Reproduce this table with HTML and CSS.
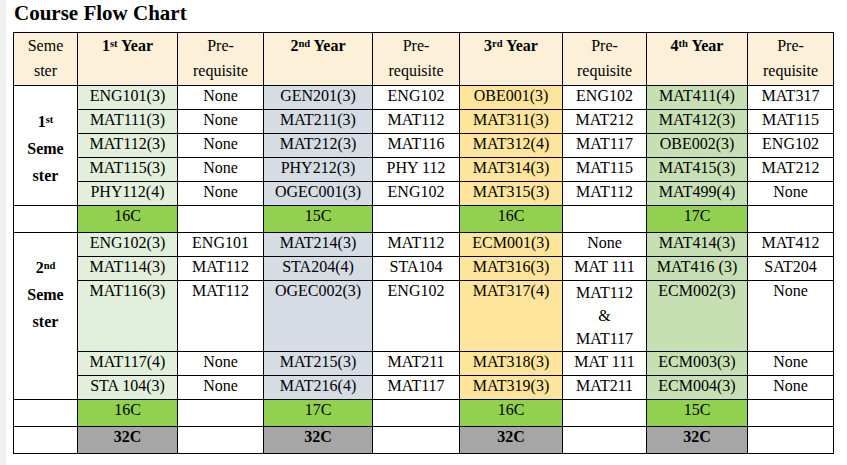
FILE: index.html
```html
<!DOCTYPE html>
<html>
<head>
<meta charset="utf-8">
<link rel="stylesheet" href="styles.css">
</head>
<body>
<div class="page">
<h1 class="title">Course Flow Chart</h1>
<table class="chart">
<colgroup>
<col class="c-sem"><col class="c-y1"><col class="c-p1"><col class="c-y2"><col class="c-p2"><col class="c-y3"><col class="c-p3"><col class="c-y4"><col class="c-p4">
</colgroup>
<thead>
<tr class="head">
<th class="h-plain">Seme<br>ster</th>
<th><span class="yr">1<sup>st</sup> Year</span><br>&nbsp;</th>
<th class="h-plain">Pre-<br>requisite</th>
<th><span class="yr">2<sup>nd</sup> Year</span><br>&nbsp;</th>
<th class="h-plain">Pre-<br>requisite</th>
<th><span class="yr">3<sup>rd</sup> Year</span><br>&nbsp;</th>
<th class="h-plain">Pre-<br>requisite</th>
<th><span class="yr">4<sup>th</sup> Year</span><br>&nbsp;</th>
<th class="h-plain">Pre-<br>requisite</th>
</tr>
</thead>
<tbody>
<tr>
<td class="sem sem1" rowspan="5">1<sup>st</sup><br>Seme<br>ster</td>
<td class="y1">ENG101(3)</td><td>None</td>
<td class="y2">GEN201(3)</td><td>ENG102</td>
<td class="y3">OBE001(3)</td><td>ENG102</td>
<td class="y4">MAT411(4)</td><td>MAT317</td>
</tr>
<tr>
<td class="y1">MAT111(3)</td><td>None</td>
<td class="y2">MAT211(3)</td><td>MAT112</td>
<td class="y3">MAT311(3)</td><td>MAT212</td>
<td class="y4">MAT412(3)</td><td>MAT115</td>
</tr>
<tr>
<td class="y1">MAT112(3)</td><td>None</td>
<td class="y2">MAT212(3)</td><td>MAT116</td>
<td class="y3">MAT312(4)</td><td>MAT117</td>
<td class="y4">OBE002(3)</td><td>ENG102</td>
</tr>
<tr>
<td class="y1">MAT115(3)</td><td>None</td>
<td class="y2">PHY212(3)</td><td>PHY 112</td>
<td class="y3">MAT314(3)</td><td>MAT115</td>
<td class="y4">MAT415(3)</td><td>MAT212</td>
</tr>
<tr>
<td class="y1">PHY112(4)</td><td>None</td>
<td class="y2">OGEC001(3)</td><td>ENG102</td>
<td class="y3">MAT315(3)</td><td>MAT112</td>
<td class="y4">MAT499(4)</td><td>None</td>
</tr>
<tr class="credits">
<td></td>
<td class="tot">16C</td><td></td>
<td class="tot">15C</td><td></td>
<td class="tot">16C</td><td></td>
<td class="tot">17C</td><td></td>
</tr>
<tr>
<td class="sem sem2" rowspan="5">2<sup>nd</sup><br>Seme<br>ster</td>
<td class="y1">ENG102(3)</td><td>ENG101</td>
<td class="y2">MAT214(3)</td><td>MAT112</td>
<td class="y3">ECM001(3)</td><td>None</td>
<td class="y4">MAT414(3)</td><td>MAT412</td>
</tr>
<tr>
<td class="y1">MAT114(3)</td><td>MAT112</td>
<td class="y2">STA204(4)</td><td>STA104</td>
<td class="y3">MAT316(3)</td><td>MAT 111</td>
<td class="y4">MAT416 (3)</td><td>SAT204</td>
</tr>
<tr class="tall">
<td class="y1">MAT116(3)</td><td>MAT112</td>
<td class="y2">OGEC002(3)</td><td>ENG102</td>
<td class="y3">MAT317(4)</td><td class="multi">MAT112<br>&amp;<br>MAT117</td>
<td class="y4">ECM002(3)</td><td>None</td>
</tr>
<tr>
<td class="y1">MAT117(4)</td><td>None</td>
<td class="y2">MAT215(3)</td><td>MAT211</td>
<td class="y3">MAT318(3)</td><td>MAT 111</td>
<td class="y4">ECM003(3)</td><td>None</td>
</tr>
<tr>
<td class="y1">STA 104(3)</td><td>None</td>
<td class="y2">MAT216(4)</td><td>MAT117</td>
<td class="y3">MAT319(3)</td><td>MAT211</td>
<td class="y4">ECM004(3)</td><td>None</td>
</tr>
<tr class="credits">
<td></td>
<td class="tot">16C</td><td></td>
<td class="tot">17C</td><td></td>
<td class="tot">16C</td><td></td>
<td class="tot">15C</td><td></td>
</tr>
<tr class="credits grand">
<td></td>
<td class="sum">32C</td><td></td>
<td class="sum">32C</td><td></td>
<td class="sum">32C</td><td></td>
<td class="sum">32C</td><td></td>
</tr>
</tbody>
</table>
</div>
</body>
</html>
```

FILE: styles.css
```css
html, body {
  margin: 0;
  padding: 0;
  background: #ffffff;
}

body {
  font-family: "Liberation Serif", "Times New Roman", serif;
  color: #000;
  min-height: 465px;
  border-left: 6px solid #f0f0f0;
  box-sizing: border-box;
}

.page {
  padding-left: 7px;
}

.title {
  margin: 0 0 7px;
  padding: 1px 0 0 1px;
  font-size: 21px;
  line-height: 24px;
  font-weight: bold;
}

.chart {
  border-collapse: collapse;
  table-layout: fixed;
  width: 821px;
  font-size: 16px;
}

.c-sem { width: 64px; }
.c-y1 { width: 100px; }
.c-p1 { width: 86px; }
.c-y2 { width: 109px; }
.c-p2 { width: 87px; }
.c-y3 { width: 103px; }
.c-p3 { width: 84px; }
.c-y4 { width: 101px; }
.c-p4 { width: 86px; }

.chart th,
.chart td {
  border: 1px solid #000;
  padding: 0 0 4px;
  text-align: center;
  vertical-align: top;
  line-height: 19px;
  white-space: nowrap;
}

.chart .head th {
  background: #fdf0d8;
  line-height: 25px;
  padding: 0 0 2px;
  font-weight: bold;
}

.chart .head th.h-plain {
  font-weight: normal;
}

sup {
  font-size: 0.66em;
  line-height: 0;
  vertical-align: 0.42em;
}

.chart td.sem {
  font-weight: bold;
  line-height: 27px;
  padding: 0;
}

.chart td.sem1 {
  vertical-align: middle;
  padding-top: 6px;
}

.chart td.sem2 {
  padding-top: 21px;
}

.y1 { background: #e2efda; }
.y2 { background: #d6dce4; }
.y3 { background: #ffe59b; }
.y4 { background: #c6e0b4; }

.chart .tall td.multi {
  line-height: 23px;
  padding-bottom: 1px;
}

.chart .credits td {
  padding-bottom: 7px;
}

.chart td.tot {
  background: #92d050;
}

.chart td.sum {
  background: #a6a6a6;
  font-weight: bold;
}
```
